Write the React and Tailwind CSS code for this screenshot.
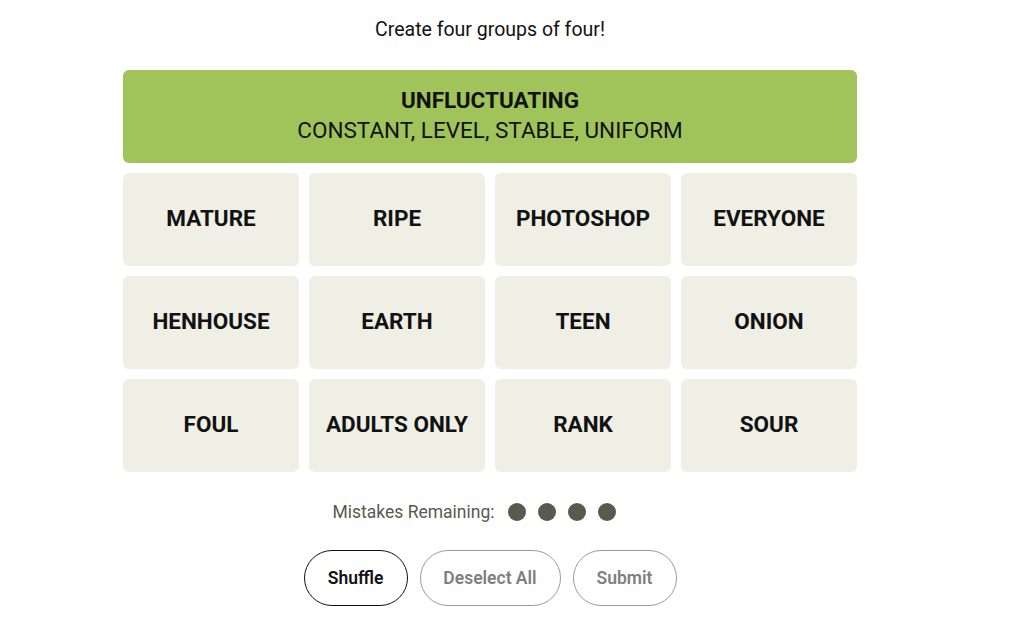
const words = [
  ["MATURE", "RIPE", "PHOTOSHOP", "EVERYONE"],
  ["HENHOUSE", "EARTH", "TEEN", "ONION"],
  ["FOUL", "ADULTS ONLY", "RANK", "SOUR"],
];

export default function App() {
  return (
    <div className="min-h-[634px] bg-white text-[#121212]" style={{ fontFamily: "Roboto, 'Liberation Sans', sans-serif" }}>
      <div className="ml-[123px] w-[734px] pt-[16px] flex flex-col items-center">
        <p className="text-[19.5px] leading-[28px] text-[#121212]">Create four groups of four!</p>

        <div className="mt-[26px] w-full flex flex-col gap-[10px]">
          <div className="h-[93px] rounded-md bg-[#a0c35a] flex flex-col items-center justify-center pb-[3px]">
            <div className="text-[22.5px] font-bold leading-[30px]">UNFLUCTUATING</div>
            <div className="text-[22.5px] leading-[30px]">CONSTANT, LEVEL, STABLE, UNIFORM</div>
          </div>
          {words.map((row, i) => (
            <div key={i} className="grid grid-cols-4 gap-[10px]">
              {row.map((w) => (
                <div
                  key={w}
                  className="h-[93px] rounded-md bg-[#efefe6] flex items-center justify-center text-[22.5px] font-bold pb-[1px]"
                >
                  {w}
                </div>
              ))}
            </div>
          ))}
        </div>

        <div className="mt-[27px] flex items-center gap-[13px] pr-[32px]">
          <span className="text-[17.5px] text-[#5a594e]">Mistakes Remaining:</span>
          <div className="flex gap-[12px]">
            {[0, 1, 2, 3].map((d) => (
              <span key={d} className="w-[18px] h-[18px] rounded-full bg-[#5a594e]" />
            ))}
          </div>
        </div>

        <div className="mt-[25px] flex gap-[12px]">
          <button className="w-[104px] h-[56px] rounded-full border border-[#121212] text-[17.5px] font-semibold text-[#121212]">
            Shuffle
          </button>
          <button className="w-[141px] h-[56px] rounded-full border border-[#9a9a9a] text-[17.5px] font-semibold text-[#7f7f7f]">
            Deselect All
          </button>
          <button className="w-[104px] h-[56px] rounded-full border border-[#9a9a9a] text-[17.5px] font-semibold text-[#7f7f7f]">
            Submit
          </button>
        </div>
      </div>
    </div>
  );
}
